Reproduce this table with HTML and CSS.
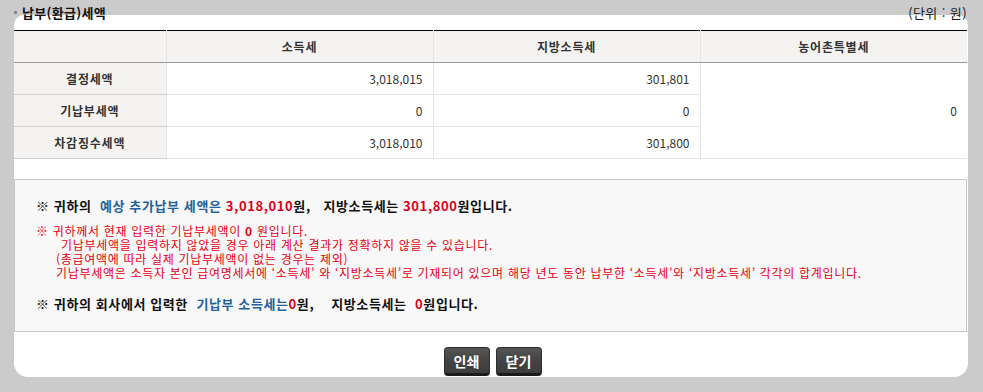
FILE: index.html
```html
<!DOCTYPE html>
<html lang="ko">
<head>
<meta charset="utf-8">
<link rel="stylesheet" href="styles.css">
</head>
<body>
<div class="page">
  <div class="title-row">
    <h2 class="title"><span class="bullet"></span>납부(환급)세액</h2>
    <span class="unit">(단위 : 원)</span>
  </div>
  <div class="panel">
    <table class="tax">
      <thead>
        <tr>
          <th class="c-label"></th>
          <th>소득세</th>
          <th>지방소득세</th>
          <th>농어촌특별세</th>
        </tr>
      </thead>
      <tbody>
        <tr>
          <th class="row-label">결정세액</th>
          <td>3,018,015</td>
          <td>301,801</td>
          <td rowspan="3" class="last">0</td>
        </tr>
        <tr>
          <th class="row-label">기납부세액</th>
          <td>0</td>
          <td>0</td>
        </tr>
        <tr>
          <th class="row-label">차감징수세액</th>
          <td>3,018,010</td>
          <td>301,800</td>
        </tr>
      </tbody>
    </table>

    <div class="info">
      <p class="lead">※ 귀하의&nbsp; <span class="blue">예상 추가납부 세액은</span> <span class="red">3,018,010</span>원,&nbsp;&nbsp; 지방소득세는 <span class="red">301,800</span>원입니다.</p>
      <div class="notice">
        <p>※ 귀하께서 현재 입력한 기납부세액이 <b>0</b> 원입니다.</p>
        <p class="ind1">기납부세액을 입력하지 않았을 경우 아래 계산 결과가 정확하지 않을 수 있습니다.</p>
        <p class="ind2">(총급여액에 따라 실제 기납부세액이 없는 경우는 제외)</p>
        <p class="ind2">기납부세액은 소득자 본인 급여명세서에 ‘소득세’ 와 ‘지방소득세’로 기재되어 있으며 해당 년도 동안 납부한 ‘소득세’와 ‘지방소득세’ 각각의 합계입니다.</p>
      </div>
      <p class="lead last-lead">※ 귀하의 회사에서 입력한&nbsp; <span class="blue">기납부 소득세는</span><span class="red">0</span>원,&nbsp;&nbsp;&nbsp; 지방소득세는&nbsp; <span class="red">0</span>원입니다.</p>
    </div>

    <div class="buttons">
      <button class="btn" type="button">인쇄</button>
      <button class="btn" type="button">닫기</button>
    </div>
  </div>
</div>
</body>
</html>
```
FILE: styles.css
```css
* { box-sizing: border-box; }
html, body {
  margin: 0;
  padding: 0;
  background: #cbcbcb;
  font-family: "Noto Sans CJK KR", "Noto Sans", sans-serif;
  color: #222;
}
.page {
  width: 983px;
  height: 392px;
  padding: 5px 15px 0 14px;
}
.title-row {
  position: relative;
  z-index: 1;
  display: flex;
  justify-content: space-between;
  align-items: center;
  height: 16px;
}
.title {
  margin: 0;
  display: flex;
  align-items: center;
  font-size: 13px;
  font-weight: bold;
  line-height: 16px;
  letter-spacing: 0.3px;
  color: #111;
}
.bullet {
  width: 3px;
  height: 3px;
  background: #888;
  margin-right: 5px;
  margin-top: -2px;
}
.unit {
  font-size: 13px;
  line-height: 16px;
  letter-spacing: 0.4px;
  color: #222;
  margin-right: 1px;
}
.panel {
  margin-top: -6px;
  width: 954px;
  height: 362px;
  background: #fff;
  border-radius: 10px 10px 14px 14px;
  padding-top: 15px;
}
.tax {
  width: 953px;
  border-collapse: collapse;
  table-layout: fixed;
  border-top: 1px solid #000;
  font-size: 12px;
}
.tax th, .tax td { padding: 0; }
.tax thead th {
  height: 32px;
  background: #f4f3f1;
  border-bottom: 1px solid #9a9a9a;
  border-left: 1px solid #e6e5e3;
  font-weight: bold;
  letter-spacing: 0.8px;
  color: #333;
  text-align: center;
}
.tax thead th.c-label { width: 152px; border-left: none; }
.tax thead th:nth-child(2),
.tax thead th:nth-child(3) { width: 267px; }
.tax .row-label {
  height: 32px;
  background: #f4f3f1;
  border-bottom: 1px solid #cfcfcf;
  font-weight: bold;
  letter-spacing: 0.8px;
  color: #333;
  text-align: center;
}
.tax td {
  height: 32px;
  border-bottom: 1px solid #e6e6e6;
  border-left: 1px solid #e6e6e6;
  text-align: right;
  padding-right: 10px;
  color: #333;
}
.info {
  margin-top: 20px;
  width: 953px;
  background: #f8f8f8;
  border: 1px solid #c6c6c6;
  padding: 17px 0 18px 21px;
}
.info p { margin: 0; white-space: nowrap; }
.lead {
  font-size: 13px;
  font-weight: bold;
  line-height: 18px;
  letter-spacing: 0.6px;
  color: #111;
}
.blue { color: #23619c; }
.red { color: #d9001b; }
.notice {
  margin-top: 9px;
  font-size: 12px;
  line-height: 14px;
  letter-spacing: 0.7px;
  color: #e60012;
}
.notice b { font-weight: bold; }
.ind1 { padding-left: 25px; }
.ind2 { padding-left: 20px; }
.info .last-lead { margin-top: 15px; }
.buttons {
  display: flex;
  justify-content: center;
  gap: 6px;
  margin-top: 15px;
  padding-left: 3px;
}
.btn {
  width: 46px;
  height: 29px;
  border: 1px solid #2e2e2e;
  border-bottom: 3px solid #1b1b1b;
  border-radius: 4px;
  background: linear-gradient(#555, #444 50%, #3d3d3d);
  color: #fff;
  font-family: "Noto Sans CJK KR", sans-serif;
  font-size: 14px;
  font-weight: bold;
  line-height: 1;
  padding: 0;
}
```
